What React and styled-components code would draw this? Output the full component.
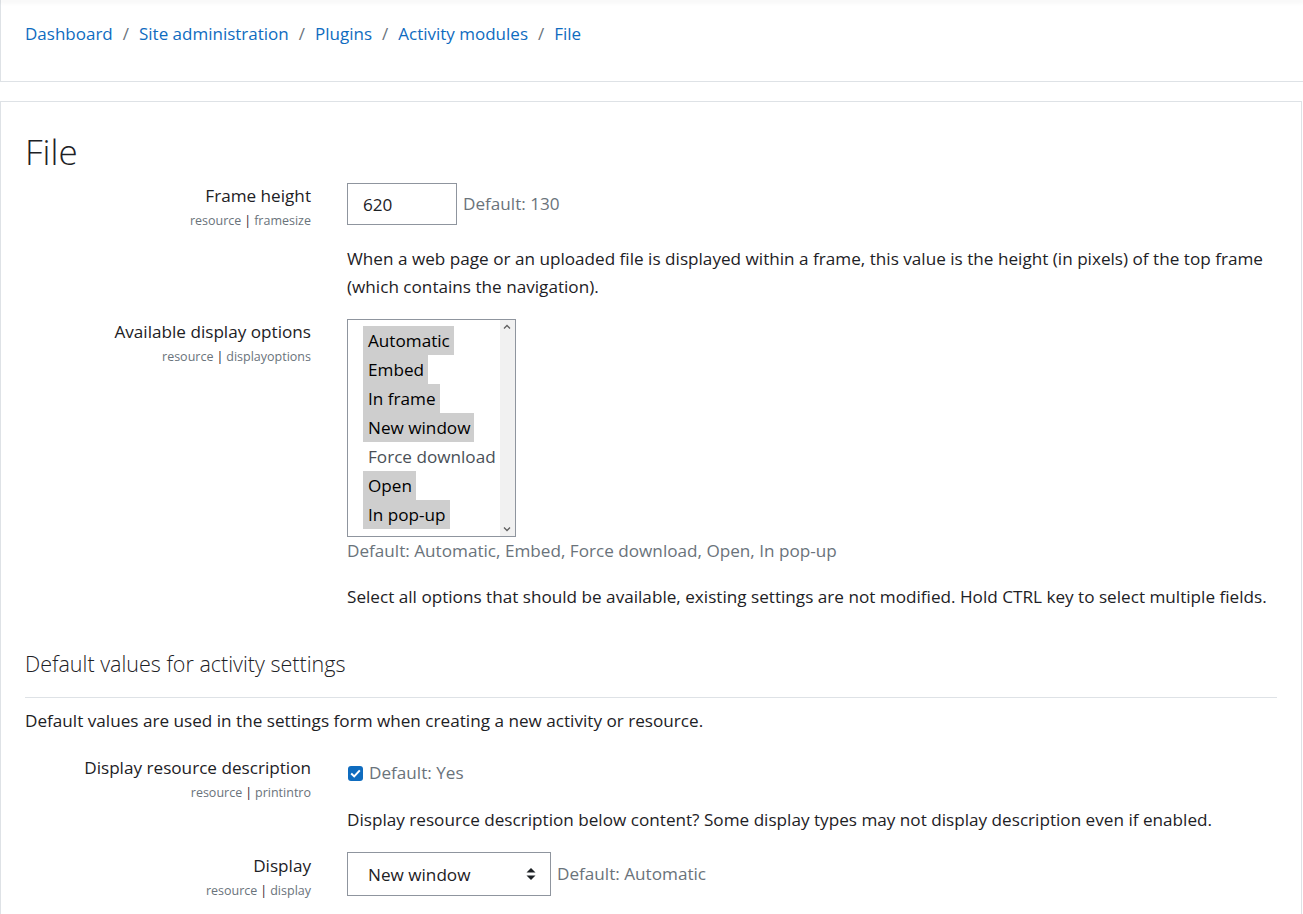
import React from "react";
import styled, { createGlobalStyle } from "styled-components";

const GlobalStyle = createGlobalStyle`
  body {
    margin: 0;
    background: #fff;
    font-family: "Open Sans", "Noto Sans", sans-serif;
    font-size: 17.15px;
    color: #1d2125;
  }
`;

const Page = styled.div`
  width: 1303px;
  overflow: hidden;
`;

const NavShadow = styled.div`
  height: 0;
  box-shadow: 0 1px 4px 1px rgba(0, 0, 0, 0.08);
  position: relative;
  z-index: 1;
`;

const HeaderCard = styled.div`
  height: 82px;
  box-sizing: border-box;
  border-left: 1px solid #dee2e6;
  border-bottom: 1px solid #dee2e6;
  padding: 20px 0 0 24px;
`;

const Crumbs = styled.nav`
  display: flex;
  align-items: center;
  gap: 10px;
  font-size: 17px;
  line-height: 28px;
`;

const Crumb = styled.a`
  color: #0f6cbf;
  text-decoration: none;
`;

const Sep = styled.span`
  color: #6a737b;
`;

const MainCard = styled.div`
  margin-top: 19px;
  border: 1px solid #dee2e6;
  border-bottom: none;
  width: 1302px;
  box-sizing: border-box;
  padding: 0 24px 40px 24px;
`;

const Title = styled.h2`
  margin: 24px 0 0 0;
  font-size: 35px;
  font-weight: 300;
  line-height: 52px;
`;

const Setting = styled.div`
  display: grid;
  grid-template-columns: 286px 1fr;
  column-gap: 36px;
  margin-top: ${(p) => p.$top}px;
`;

const LabelCol = styled.div`
  text-align: right;
`;

const Label = styled.div`
  line-height: 28px;
`;

const Meta = styled.div`
  font-size: 12.5px;
  line-height: 16px;
  color: #6a737b;
  margin-top: 3px;
`;

const Bar = styled.span`
  color: #1d2125;
  margin: 0 3px;
`;

const ControlLine = styled.div`
  display: flex;
  align-items: center;
  gap: 6px;
  margin-top: ${(p) => p.$top || 0}px;
  min-height: 28px;
`;

const TextInput = styled.div`
  width: 110px;
  height: 42px;
  box-sizing: border-box;
  border: 1px solid #8f959e;
  padding: 0 15px;
  display: flex;
  align-items: center;
  margin-top: 1px;
`;

const DefaultText = styled.span`
  color: #6a737b;
  line-height: 28px;
`;

const Desc = styled.p`
  margin: ${(p) => p.$top}px 0 0 0;
  line-height: 28px;
`;

const ListBox = styled.div`
  margin-top: 1px;
  width: 169px;
  height: 218px;
  box-sizing: border-box;
  border: 1px solid #8f959e;
  display: flex;
`;

const Options = styled.div`
  flex: 1;
  padding: 6px 0 0 15px;
  display: flex;
  flex-direction: column;
  align-items: flex-start;
`;

const Option = styled.span`
  height: 29px;
  line-height: 29px;
  padding: 0 4px 0 5px;
  background: ${(p) => (p.$selected ? "#cecece" : "transparent")};
  color: ${(p) => (p.$selected ? "#000" : "#495057")};
  white-space: nowrap;
`;

const ScrollBar = styled.div`
  width: 17px;
  background: #f1f1f1;
  display: flex;
  flex-direction: column;
  justify-content: space-between;
  align-items: center;
  padding: 4px 0;
`;

const SectionHeading = styled.h3`
  margin: 38px 0 0 0;
  font-size: 21.5px;
  font-weight: 300;
  line-height: 29px;
`;

const Rule = styled.hr`
  margin: 19px 0 0 0;
  border: 0;
  border-top: 1px solid #dee2e6;
`;

const Para = styled.p`
  margin: 9px 0 0 0;
  line-height: 28px;
`;

const Check = styled.span`
  width: 15px;
  height: 15px;
  border-radius: 3px;
  background: #0f6cbf;
  display: inline-flex;
  align-items: center;
  justify-content: center;
  margin-left: 1px;
`;

const Select = styled.div`
  width: 204px;
  height: 44px;
  box-sizing: border-box;
  border: 1px solid #8f959e;
  display: flex;
  align-items: center;
  justify-content: space-between;
  padding: 0 14px 0 20px;
`;

const Chevron = ({ up }) => (
  <svg width="8" height="5" viewBox="0 0 8 5">
    <path
      d={up ? "M1 4.5 L4 1.5 L7 4.5" : "M1 0.5 L4 3.5 L7 0.5"}
      fill="none"
      stroke="#606060"
      strokeWidth="1.3"
    />
  </svg>
);

const SortIcon = () => (
  <svg width="10" height="14" viewBox="0 0 10 14">
    <path d="M5 1 L9.5 5.5 H0.5 Z" fill="#1d2125" />
    <path d="M5 13 L9.5 8.5 H0.5 Z" fill="#1d2125" />
  </svg>
);

const CheckMark = () => (
  <svg width="11" height="9" viewBox="0 0 11 9">
    <path d="M1.2 4.6 L4.2 7.4 L9.8 1.4" fill="none" stroke="#fff" strokeWidth="2" />
  </svg>
);

const options = [
  ["Automatic", true],
  ["Embed", true],
  ["In frame", true],
  ["New window", true],
  ["Force download", false],
  ["Open", true],
  ["In pop-up", true],
];

const SettingLabel = ({ title, plugin, name }) => (
  <LabelCol>
    <Label>{title}</Label>
    <Meta>
      {plugin}
      <Bar>|</Bar>
      {name}
    </Meta>
  </LabelCol>
);

export default function App() {
  return (
    <Page>
      <GlobalStyle />
      <NavShadow />
      <HeaderCard>
        <Crumbs>
          <Crumb href="#">Dashboard</Crumb>
          <Sep>/</Sep>
          <Crumb href="#">Site administration</Crumb>
          <Sep>/</Sep>
          <Crumb href="#">Plugins</Crumb>
          <Sep>/</Sep>
          <Crumb href="#">Activity modules</Crumb>
          <Sep>/</Sep>
          <Crumb href="#">File</Crumb>
        </Crumbs>
      </HeaderCard>

      <MainCard>
        <Title>File</Title>

        <Setting $top={4}>
          <SettingLabel title="Frame height" plugin="resource" name="framesize" />
          <div>
            <ControlLine>
              <TextInput>620</TextInput>
              <DefaultText>Default: 130</DefaultText>
            </ControlLine>
            <Desc $top={20}>
              When a web page or an uploaded file is displayed within a frame, this value is the height (in pixels) of the top frame (which contains the navigation).
            </Desc>
          </div>
        </Setting>

        <Setting $top={17}>
          <SettingLabel title="Available display options" plugin="resource" name="displayoptions" />
          <div>
            <ListBox>
              <Options>
                {options.map(([text, sel]) => (
                  <Option key={text} $selected={sel}>
                    {text}
                  </Option>
                ))}
              </Options>
              <ScrollBar>
                <Chevron up />
                <Chevron />
              </ScrollBar>
            </ListBox>
            <DefaultText as="div">Default: Automatic, Embed, Force download, Open, In pop-up</DefaultText>
            <Desc $top={18}>
              Select all options that should be available, existing settings are not modified. Hold CTRL key to select multiple fields.
            </Desc>
          </div>
        </Setting>

        <SectionHeading>Default values for activity settings</SectionHeading>
        <Rule />
        <Para>Default values are used in the settings form when creating a new activity or resource.</Para>

        <Setting $top={19}>
          <SettingLabel title="Display resource description" plugin="resource" name="printintro" />
          <div>
            <ControlLine $top={5}>
              <Check>
                <CheckMark />
              </Check>
              <DefaultText>Default: Yes</DefaultText>
            </ControlLine>
            <Desc $top={19}>
              Display resource description below content? Some display types may not display description even if enabled.
            </Desc>
          </div>
        </Setting>

        <Setting $top={18}>
          <SettingLabel title="Display" plugin="resource" name="display" />
          <div>
            <ControlLine>
              <Select>
                <span>New window</span>
                <SortIcon />
              </Select>
              <DefaultText>Default: Automatic</DefaultText>
            </ControlLine>
          </div>
        </Setting>
      </MainCard>
    </Page>
  );
}
